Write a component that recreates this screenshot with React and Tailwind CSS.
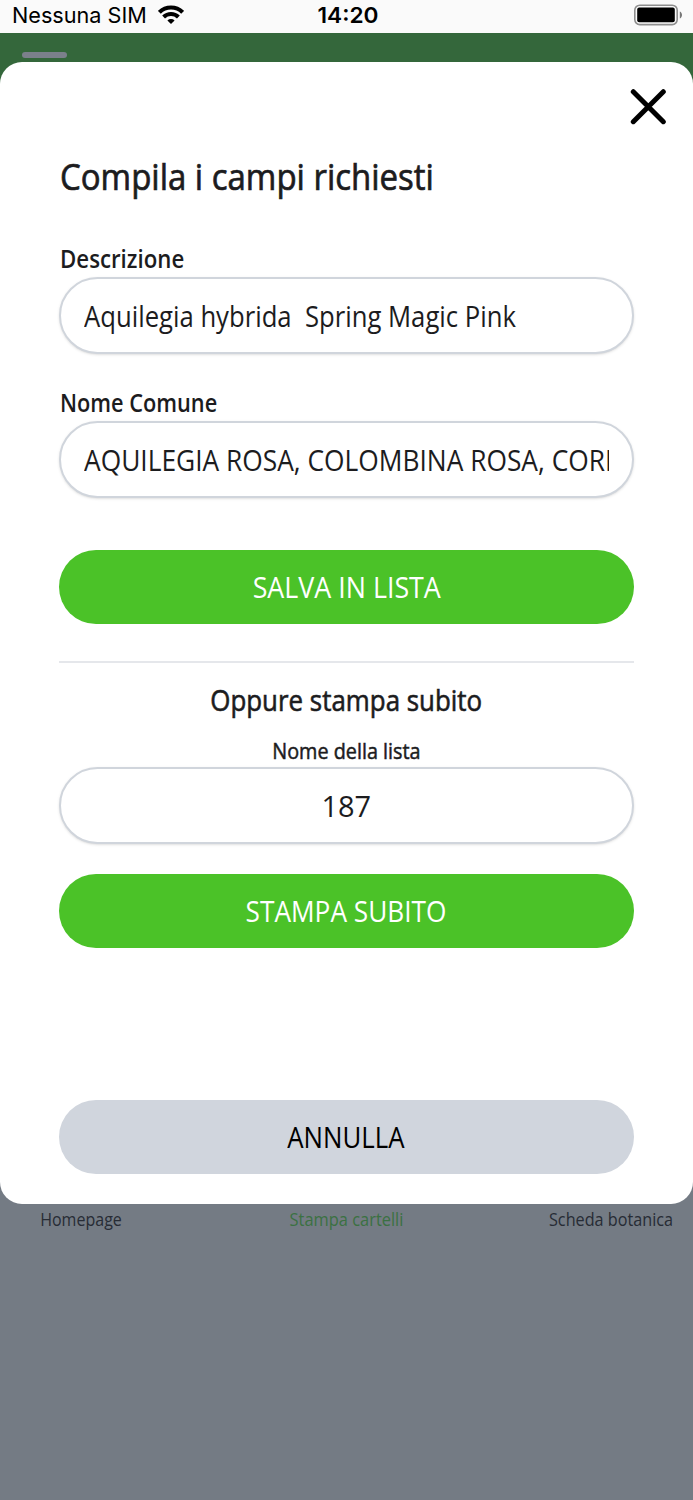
function StatusBar() {
  return (
    <div className="flex h-[33px] items-center bg-[#fafafa] pb-[4px] text-[22px] leading-none text-black">
      <div className="flex flex-1 items-center pl-3 font-[Inter,sans-serif]">
        <span className="w-[146px] origin-left scale-x-[0.983] whitespace-nowrap">Nessuna SIM</span>
        <svg className="h-[20px] w-[26px]" viewBox="0 0 26 20">
          <g fill="none" stroke="#000" strokeWidth="4">
            <path d="M1.4 7.3a16.4 16.4 0 0 1 23.2 0" />
            <path d="M5.6 12a10.5 10.5 0 0 1 14.8 0" />
          </g>
          <path d="M13 19l-3.6-3.6a5.1 5.1 0 0 1 7.2 0z" fill="#000" />
        </svg>
      </div>
      <div className="w-[64px] scale-x-[1.03] text-center font-[Inter,sans-serif] font-semibold">14:20</div>
      <div className="flex flex-1 justify-end pr-[10px]">
        <svg className="h-[22px] w-[50px]" viewBox="0 0 50 22">
          <rect x="1.8" y="1.2" width="42.4" height="19.4" rx="5" fill="none" stroke="#8e8e8e" strokeWidth="1.6" />
          <rect x="4.2" y="3.6" width="37.6" height="14.6" rx="2" fill="#000" />
          <path d="M46.8 7.4c1.4.6 2.2 2 2.2 3.5s-.8 2.9-2.2 3.5z" fill="#777" />
        </svg>
      </div>
    </div>
  );
}

function Field({ children }) {
  return (
    <div className="h-[77px] rounded-full border-2 border-[#d0d5dc] bg-white px-[22.5px] shadow-sm">
      <div className="h-full overflow-hidden text-[29px] leading-[73px] whitespace-pre">{children}</div>
    </div>
  );
}

function PillButton({ className, children }) {
  return (
    <button className={`block h-[74px] w-full rounded-full text-[29px] leading-[74px] whitespace-nowrap ${className}`}>
      {children}
    </button>
  );
}

export default function App() {
  return (
    <div className="flex h-[1500px] w-[693px] flex-col overflow-hidden bg-[#747b84] font-['Open_Sans',sans-serif] text-[#1c1c1e]">
      <StatusBar />
      <div className="h-[29px] bg-[#34673b] pt-[19px] pl-[22px]">
        <div className="h-[6px] w-[45px] rounded-full bg-[#7b808b]" />
      </div>

      <div className="bg-[linear-gradient(#34673b_50%,#747b84_50%)]">
        <div className="flex h-[1142px] flex-col rounded-[22px] bg-white pr-[59.5px] pl-[59px]">
          <div className="-mr-[32.5px] flex h-[90px] justify-end pt-[27px]">
            <svg className="h-[36px] w-[36px]" viewBox="0 0 36 36" fill="none" stroke="#000" strokeWidth="5" strokeLinecap="round">
              <path d="M3.3 2.7l30 30M33.3 2.7l-30 30" />
            </svg>
          </div>

          <h1 className="h-[92px] pl-px text-[36px] leading-[50px] whitespace-nowrap [-webkit-text-stroke:0.7px_#1c1c1e]">
            <span className="inline-block origin-left scale-x-[0.916]">Compila i campi richiesti</span>
          </h1>

          <label className="h-[33px] pl-[0.5px] text-[25px] leading-[28px] font-semibold">
            <span className="inline-block origin-left scale-x-[0.89]">Descrizione</span>
          </label>
          <Field>
            <span className="inline-block origin-left scale-x-[0.885]">{"Aquilegia hybrida  Spring Magic Pink"}</span>
          </Field>

          <label className="mt-[34px] h-[33px] pl-[0.5px] text-[25px] leading-[28px] font-semibold">
            <span className="inline-block origin-left scale-x-[0.87]">Nome Comune</span>
          </label>
          <Field>
            <span className="inline-block origin-left scale-x-[0.908]">AQUILEGIA ROSA, COLOMBINA ROSA, CORN</span>
          </Field>

          <PillButton className="mt-[52px] bg-[#4bc228] text-white">
            <span className="inline-block scale-x-[0.925]">SALVA IN LISTA</span>
          </PillButton>

          <div className="mt-[37px] h-[2px] bg-[#e5e7eb]" />

          <h2 className="mt-[17px] h-[40px] text-center text-[29px] leading-[40px] [-webkit-text-stroke:0.6px_#1c1c1e]">
            <span className="inline-block scale-x-[0.893]">Oppure stampa subito</span>
          </h2>
          <label className="mt-[15px] h-[32px] text-center text-[22px] leading-[30px] [-webkit-text-stroke:0.5px_#1c1c1e]">
            <span className="inline-block scale-x-[0.9]">Nome della lista</span>
          </label>
          <Field>
            <div className="text-center">187</div>
          </Field>

          <PillButton className="mt-[30px] bg-[#4bc228] text-white">
            <span className="inline-block scale-x-[0.905]">STAMPA SUBITO</span>
          </PillButton>

          <PillButton className="mt-auto mb-[30px] bg-[#d0d5dd] text-black">
            <span className="inline-block scale-x-[0.89]">ANNULLA</span>
          </PillButton>
        </div>
      </div>

      <nav className="grid grid-cols-[162px_1fr_164px] pt-[2px] text-center text-[18px] leading-[26px] whitespace-nowrap text-[#272c35]">
        <span className="scale-x-[0.89]">Homepage</span>
        <span className="translate-x-px scale-x-[0.912] text-[#3b7142]">Stampa cartelli</span>
        <span className="scale-x-[0.9]">Scheda botanica</span>
      </nav>
    </div>
  );
}
